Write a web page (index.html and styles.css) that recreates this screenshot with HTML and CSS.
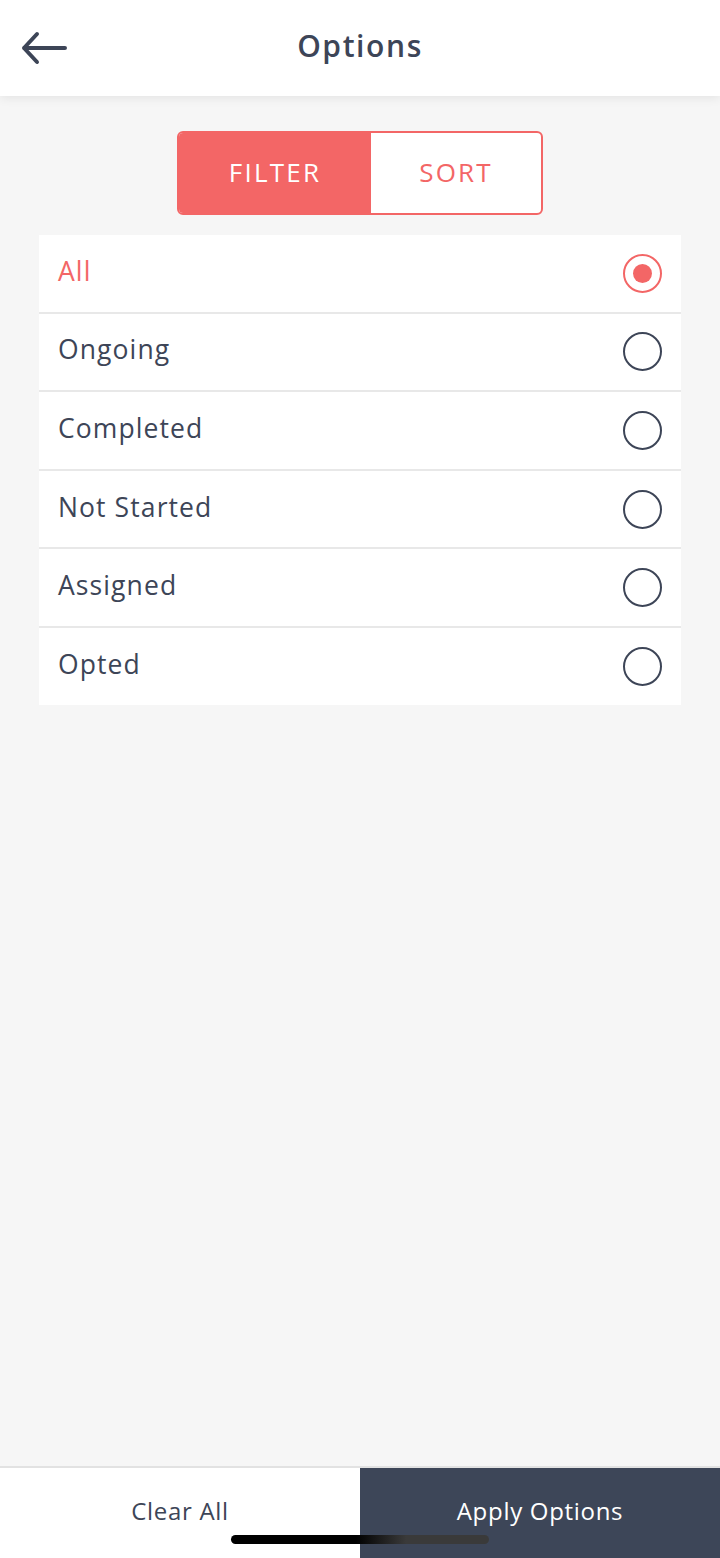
FILE: index.html
```html
<!DOCTYPE html>
<html>
<head>
	<meta http-equiv="Content-Type" content="text/html;charset=utf-8"/>
	<title>Options</title>
	<link rel="stylesheet" href="styles.css">
</head>
<body>
	<div class="page">
		<div class="header">
			<a href="javascript:;" class="back">
				<svg width="48" height="34" viewBox="0 0 48 34">
					<path d="M45 17H4M17 3L4 17L17 31" fill="none" stroke="#3d4557" stroke-width="4" stroke-linecap="round" stroke-linejoin="round"/>
				</svg>
			</a>
			<h1 class="title">Options</h1>
		</div>

		<div class="content">
			<div class="tabs">
				<span class="tab on">FILTER</span>
				<span class="tab">SORT</span>
			</div>

			<ul class="list">
				<li class="item on"><span>All</span><i class="radio"></i></li>
				<li class="item"><span>Ongoing</span><i class="radio"></i></li>
				<li class="item"><span>Completed</span><i class="radio"></i></li>
				<li class="item"><span>Not Started</span><i class="radio"></i></li>
				<li class="item"><span>Assigned</span><i class="radio"></i></li>
				<li class="item"><span>Opted</span><i class="radio"></i></li>
			</ul>
		</div>

		<div class="footer">
			<a href="javascript:;" class="btn clear">Clear All</a>
			<a href="javascript:;" class="btn apply">Apply Options</a>
			<div class="home-bar"></div>
		</div>
	</div>
</body>
</html>
```

FILE: styles.css
```css
*{
	margin: 0;
	padding: 0;
	text-decoration: none;
	box-sizing: border-box;
}
body{
	font-family: "Open Sans", "Noto Sans", sans-serif;
	background: #f6f6f6;
	color: #3d4557;
}
.page{
	width: 720px;
	height: 1558px;
	display: flex;
	flex-direction: column;
}
.header{
	height: 96px;
	background: #fff;
	display: flex;
	align-items: center;
	justify-content: center;
	position: relative;
	box-shadow: 0 2px 10px rgba(0,0,0,.08);
	z-index: 2;
	padding-bottom: 5px;
}
.back{
	position: absolute;
	left: 20px;
	top: 31px;
	display: block;
	line-height: 0;
}
.title{
	font-size: 30px;
	font-weight: 600;
	color: #3d4557;
	letter-spacing: 1.6px;
}
.content{
	flex: 1;
	padding: 35px 39px 0;
}
.tabs{
	width: 366px;
	height: 84px;
	margin: 0 auto 20px;
	display: flex;
	border: 2px solid #f36666;
	border-radius: 6px;
	overflow: hidden;
	background: #fff;
}
.tab{
	flex: 1;
	display: flex;
	align-items: center;
	justify-content: center;
	font-size: 26px;
	color: #f36666;
	letter-spacing: 2.2px;
	padding-bottom: 2px;
}
.tab.on{
	flex: 0 0 192px;
	background: #f36666;
	color: #fff;
}
.list{
	list-style: none;
	display: flex;
	flex-direction: column;
	gap: 2px;
	background: #e8e8e8;
}
.item{
	height: 76.6px;
	background: #fff;
	display: flex;
	align-items: center;
	justify-content: space-between;
	padding: 0 19px 5px 19px;
	font-size: 26.5px;
	color: #3d4557;
	letter-spacing: 1.1px;
}
.radio{
	width: 39px;
	height: 39px;
	border: 2.5px solid #3d4557;
	border-radius: 50%;
	display: flex;
	align-items: center;
	justify-content: center;
	margin-top: 5px;
}
.item.on{
	color: #f36666;
}
.item.on .radio{
	border-color: #f36666;
}
.item.on .radio:after{
	content: "";
	width: 19px;
	height: 19px;
	border-radius: 50%;
	background: #f36666;
}
.footer{
	height: 92px;
	display: flex;
	border-top: 2px solid #e2e2e2;
	position: relative;
}
.btn{
	flex: 1;
	display: flex;
	align-items: center;
	justify-content: center;
	font-size: 24px;
	letter-spacing: .7px;
	padding-bottom: 6px;
}
.clear{
	background: #fff;
	color: #3d4557;
}
.apply{
	background: #3d4658;
	color: #fff;
}
.home-bar{
	position: absolute;
	left: 231px;
	bottom: 14px;
	width: 258px;
	height: 9px;
	border-radius: 5px;
	background: linear-gradient(to right, #000 0, #000 125px, #3a3a3a 175px, #3a3a3a 100%);
}
```
